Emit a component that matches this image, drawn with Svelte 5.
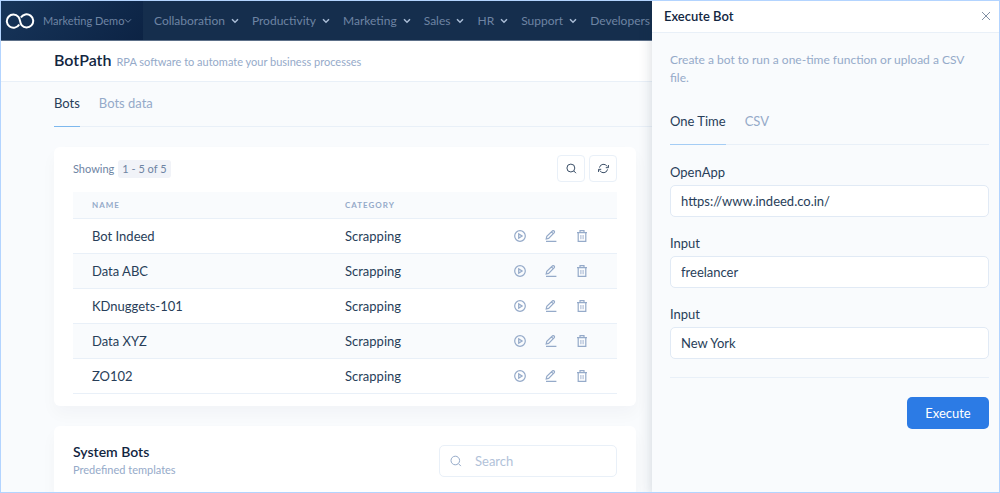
<script lang="ts">
let menus = ['Collaboration', 'Productivity', 'Marketing', 'Sales', 'HR', 'Support', 'Developers']

let bots = [
  { name: 'Bot Indeed', category: 'Scrapping' },
  { name: 'Data ABC', category: 'Scrapping' },
  { name: 'KDnuggets-101', category: 'Scrapping' },
  { name: 'Data XYZ', category: 'Scrapping' },
  { name: 'ZO102', category: 'Scrapping' }
]

let fields = [
  { id: 'open-app', label: 'OpenApp', value: 'https://www.indeed.co.in/' },
  { id: 'input-query', label: 'Input', value: 'freelancer' },
  { id: 'input-location', label: 'Input', value: 'New York' }
]
</script>

{#snippet chevron()}
  <svg class="chevron" viewBox="0 0 8 6"><path d="M1 1.3 4 4.3 7 1.3" /></svg>
{/snippet}

{#snippet magnifier()}
  <svg class="icon" viewBox="0 0 12 12"><circle cx="5.3" cy="5.5" r="4.3" /><path d="m8.5 8.7 2.4 2.4" /></svg>
{/snippet}

<div class="page">
  <div class="main">
    <header class="topbar">
      <div class="brand">
        <svg class="logo" viewBox="0 0 30 16">
          <path d="M14.2 11.4A6.6 6.6 0 1 1 13.4 3.8C15.6 6.4 14.6 9.8 16.6 12.2A6.6 6.6 0 1 0 15.9 4.6" />
        </svg>
        <button class="workspace">Marketing Demo{@render chevron()}</button>
      </div>
      <nav>
        {#each menus as menu}
          <button class="menu">{menu}{@render chevron()}</button>
        {/each}
      </nav>
    </header>

    <div class="title">
      <h1>BotPath</h1>
      <span>RPA software to automate your business processes</span>
    </div>

    <main>
      <div class="tabs">
        <a href="#bots" class="tab selected">Bots</a>
        <a href="#data" class="tab">Bots data</a>
      </div>

      <section class="card">
        <div class="toolbar">
          <span class="showing">Showing</span>
          <span class="count">1 - 5 of 5</span>
          <button class="tool first" aria-label="Search">{@render magnifier()}</button>
          <button class="tool" aria-label="Refresh">
            <svg class="icon" viewBox="0 0 12 12">
              <path d="M1.6 5A4.5 4.5 0 0 1 10 3.8M10.4 7A4.5 4.5 0 0 1 2 8.2" />
              <path d="M11.4 2.2v2.9H8.5M.6 9.8V6.9h2.9" />
            </svg>
          </button>
        </div>
        <table>
          <thead>
            <tr>
              <th class="name">Name</th>
              <th>Category</th>
              <th class="actions"></th>
            </tr>
          </thead>
          <tbody>
            {#each bots as bot}
              <tr>
                <td>{bot.name}</td>
                <td>{bot.category}</td>
                <td>
                  <div class="buttons">
                    <button aria-label="Run {bot.name}">
                      <svg class="icon" viewBox="0 0 12 12"><circle cx="6" cy="6" r="5.3" /><path d="M4.7 3.9v4.2L8.1 6z" /></svg>
                    </button>
                    <button aria-label="Edit {bot.name}">
                      <svg class="icon" viewBox="0 0 12 12"><path d="M1 11.4h10.4M1.2 9l.6-2.6L7.6.8Q8.4.3 9.1 1t.2 1.6L3.6 8.4zM6.5 2l1.7 1.7" /></svg>
                    </button>
                    <button aria-label="Delete {bot.name}">
                      <svg class="icon" viewBox="0 0 12 12">
                        <path d="M1 2.6h10M4 2.5V.7h4v1.8M2.2 2.8v8.6h7.6V2.8" />
                        <path class="thin" d="M4.6 5v4.2M6 5v4.2M7.4 5v4.2" />
                      </svg>
                    </button>
                  </div>
                </td>
              </tr>
            {/each}
          </tbody>
        </table>
      </section>

      <section class="card system">
        <div>
          <h2>System Bots</h2>
          <p>Predefined templates</p>
        </div>
        <label class="search">
          {@render magnifier()}
          <input type="search" placeholder="Search" aria-label="Search" />
        </label>
      </section>
    </main>
  </div>

  <aside>
    <div class="heading">
      <h2>Execute Bot</h2>
      <button class="close" aria-label="Close">
        <svg viewBox="0 0 10 10"><path d="m1 1 8 8M9 1 1 9" /></svg>
      </button>
    </div>
    <form>
      <p>Create a bot to run a one-time function or upload a CSV file.</p>
      <div class="tabs">
        <a href="#once" class="tab selected">One Time</a>
        <a href="#csv" class="tab">CSV</a>
      </div>
      {#each fields as field}
        <div class="field">
          <label for={field.id}>{field.label}</label>
          <input id={field.id} type="text" value={field.value} />
        </div>
      {/each}
      <hr />
      <button type="button" class="execute">Execute</button>
    </form>
  </aside>
</div>

<style>
  .page {
    --dark: #12263f;
    --text: #283e59;
    --muted: #95aac9;
    --line: #e9f0f8;
    --back: #f9fbfd;
    display: grid;
    grid-template-columns: minmax(0, 1fr) 347px;
    box-sizing: border-box;
    height: 100vh;
    overflow: hidden;
    border: 1px solid #b3d4ff;
    background: var(--back);
    color: var(--text);
    font-family: Lato, sans-serif;
    font-size: 13px;
    line-height: 18px;
  }

  h1,
  h2,
  p {
    margin: 0;
  }

  h1,
  h2 {
    color: var(--dark);
    font-weight: 600;
  }

  button,
  input {
    box-sizing: border-box;
    padding: 0;
    border: 0;
    background: none;
    color: inherit;
    font: inherit;
  }

  button {
    cursor: pointer;
  }

  svg {
    flex: none;
    fill: none;
    stroke: currentColor;
  }

  .icon {
    display: block;
    width: 12px;
    height: 12px;
  }

  .chevron {
    width: 8px;
    height: 6px;
    stroke-width: 1.5;
  }

  .topbar {
    display: flex;
    height: 39px;
    border-bottom: 1px solid #5d7089;
    background: #152e4d;
    color: #6e84a3;
    overflow: hidden;
  }

  .brand {
    display: flex;
    flex: none;
    align-items: center;
    gap: 8px;
    box-sizing: border-box;
    width: 142px;
    padding-left: 4px;
    background: linear-gradient(135deg, #17355a, #0c2344);
  }

  .logo {
    width: 30px;
    height: 16px;
    color: #fff;
    stroke-width: 2;
  }

  .workspace {
    display: flex;
    align-items: center;
    font-size: 11px;
    white-space: nowrap;
  }

  .workspace .chevron {
    stroke-width: 1;
  }

  nav {
    display: flex;
    align-items: center;
    gap: 13px;
    padding-left: 11px;
    font-size: 12px;
  }

  .menu {
    display: flex;
    flex: none;
    align-items: center;
    gap: 6px;
  }

  .menu .chevron {
    color: #a9bcd6;
  }

  .title {
    display: flex;
    align-items: baseline;
    gap: 5px;
    height: 31px;
    padding: 9px 0 0 53px;
    border-bottom: 1px solid var(--line);
    background: #fff;
    color: var(--muted);
    font-size: 11px;
  }

  .title h1 {
    font-size: 16px;
    line-height: 20px;
  }

  main {
    padding-left: 53px;
  }

  .tabs {
    display: flex;
    gap: 19px;
    border-bottom: 1px solid var(--line);
  }

  .tab {
    margin-bottom: -1px;
    padding: 12px 0 14px;
    border-bottom: 1px solid transparent;
    color: var(--muted);
    text-decoration: none;
  }

  .tab.selected {
    border-color: #7db8ee;
    color: var(--text);
  }

  .card {
    margin: 20px 16px 0 0;
    padding: 8px 19px 12px;
    border-radius: 6px;
    background: #fff;
    box-shadow: 0 8px 16px rgba(18, 38, 63, 0.03);
  }

  .toolbar {
    display: flex;
    align-items: center;
    gap: 4px;
    margin-bottom: 10px;
    color: #6e84a3;
    font-size: 11px;
  }

  .count {
    padding: 0 4px;
    border-radius: 3px;
    background: #f1f3f8;
  }

  .tool {
    display: grid;
    place-items: center;
    width: 28px;
    height: 27px;
    border: 1px solid var(--line);
    border-radius: 4px;
    color: var(--text);
  }

  .tool .icon {
    width: 11px;
    height: 11px;
  }

  .tool.first {
    margin-left: auto;
  }

  table {
    width: 100%;
    border-spacing: 0;
    table-layout: fixed;
  }

  th,
  td {
    box-sizing: border-box;
    height: 35px;
    padding: 0 0 0 19px;
    border-bottom: 1px solid var(--line);
    text-align: left;
  }

  th {
    height: 27px;
    background: var(--back);
    color: var(--muted);
    font-size: 8px;
    font-weight: 700;
    letter-spacing: 1px;
    text-transform: uppercase;
  }

  .name {
    width: 253px;
  }

  .actions {
    width: 122px;
  }

  tbody tr:nth-child(even) {
    background: var(--back);
  }

  .buttons {
    display: flex;
    gap: 19px;
    color: var(--muted);
  }

  .buttons .icon {
    stroke-width: 1.2;
  }

  .buttons .thin {
    stroke-width: 0.6;
  }

  .system {
    display: flex;
    align-items: center;
    justify-content: space-between;
    padding: 17px 19px;
  }

  .system h2 {
    font-size: 14px;
  }

  .system p {
    color: var(--muted);
    font-size: 11px;
  }

  .search {
    display: flex;
    align-items: center;
    gap: 13px;
    box-sizing: border-box;
    width: 178px;
    height: 32px;
    padding: 0 10px;
    border: 1px solid var(--line);
    border-radius: 5px;
    color: var(--muted);
  }

  .search input {
    min-width: 0;
    outline: none;
  }

  .search input::placeholder {
    color: #b1c2d9;
  }

  aside {
    z-index: 1;
    background: var(--back);
    box-shadow: 0 0 12px rgba(18, 38, 63, 0.18);
  }

  .heading {
    display: flex;
    align-items: center;
    justify-content: space-between;
    box-sizing: border-box;
    height: 32px;
    padding: 0 8px 2px 12px;
    border-bottom: 1px solid var(--line);
    background: #fff;
  }

  .heading h2 {
    font-size: 13px;
  }

  .close svg {
    display: block;
    width: 10px;
    height: 10px;
    color: #8190a5;
  }

  form {
    display: flex;
    flex-direction: column;
    padding: 18px 10px 0 18px;
  }

  form p {
    padding-right: 16px;
    color: var(--muted);
    font-size: 12px;
  }

  form .tabs {
    margin: 13px 0 18px;
  }

  form .tab.selected {
    border-color: #a5cdf5;
  }

  .field {
    display: flex;
    flex-direction: column;
    gap: 4px;
    margin-bottom: 17px;
  }

  .field input {
    height: 32px;
    padding: 0 10px;
    border: 1px solid #e1eaf5;
    border-radius: 5px;
    background: #fff;
  }

  hr {
    width: 100%;
    margin: 1px 0 19px;
    border: 0;
    border-top: 1px solid var(--line);
  }

  .execute {
    align-self: flex-end;
    width: 82px;
    height: 32px;
    border-radius: 5px;
    background: #2c7be5;
    color: #fff;
  }
</style>
